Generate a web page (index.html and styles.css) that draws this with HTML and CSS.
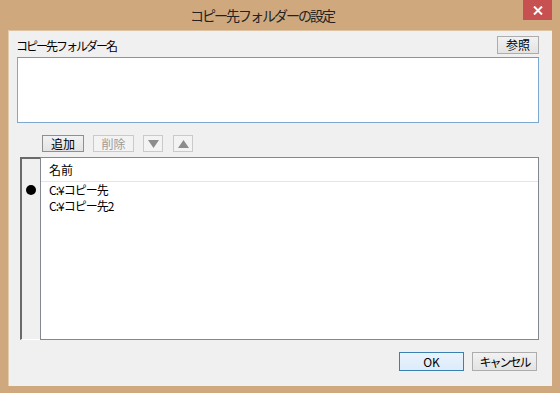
FILE: index.html
```html
<!DOCTYPE html>
<html lang="ja">
<head>
    <meta charset="UTF-8">
    <title>コピー先フォルダーの設定</title>
    <link rel="stylesheet" href="styles.css">
</head>
<body>
    <div class="window">
        <div class="titlebar">
            <span></span>
            <div class="title">コピー先フォルダーの設定</div>
            <button class="close-btn">
                <svg width="10" height="9" viewBox="0 0 10 9"><path d="M1 0.5 L9 8.5 M9 0.5 L1 8.5" stroke="#fff" stroke-width="2"/></svg>
            </button>
        </div>

        <div class="client">
            <div class="top-row">
                <span class="label">コピー先フォルダー名</span>
                <button class="btn browse-btn">参照</button>
            </div>

            <div class="name-box"></div>

            <div class="toolbar">
                <button class="btn add-btn">追加</button>
                <button class="btn del-btn" disabled>削除</button>
                <button class="btn arrow-btn" disabled>
                    <svg width="11" height="8" viewBox="0 0 11 8"><polygon points="0,0 11,0 5.5,8" fill="#8c8c8c"/></svg>
                </button>
                <button class="btn arrow-btn" disabled>
                    <svg width="11" height="8" viewBox="0 0 11 8"><polygon points="0,8 11,8 5.5,0" fill="#8c8c8c"/></svg>
                </button>
            </div>

            <div class="list-area">
                <div class="marker-col">
                    <div class="marker-head"></div>
                    <div class="marker-row"><span class="dot"></span></div>
                    <div class="marker-row"></div>
                </div>
                <div class="list">
                    <div class="list-head">名前</div>
                    <div class="list-row">C:¥コピー先</div>
                    <div class="list-row">C:¥コピー先2</div>
                </div>
            </div>

            <div class="footer">
                <button class="btn ok-btn">OK</button>
                <button class="btn cancel-btn">キャンセル</button>
            </div>
        </div>
    </div>
</body>
</html>
```

FILE: styles.css
```css
* {
    margin: 0;
    padding: 0;
    box-sizing: border-box;
}

body {
    font-family: "Noto Sans CJK JP", "Noto Sans", sans-serif;
    font-size: 12px;
    color: #000;
    background: #cfa97d;
}

.window {
    width: 560px;
    height: 393px;
    background: #cfa97d;
    padding: 0 8px 7px 8px;
    display: flex;
    flex-direction: column;
}

.titlebar {
    height: 30px;
    display: grid;
    grid-template-columns: 1fr auto 1fr;
    align-items: start;
}

.title {
    font-size: 14px;
    letter-spacing: -2px;
    line-height: 31px;
    color: #222;
    margin-right: 36px;
}

.close-btn {
    justify-self: end;
    width: 29px;
    height: 20px;
    border: none;
    background: #c75050;
    display: flex;
    align-items: center;
    justify-content: center;
}

.client {
    flex: 1;
    background: #f0f0f0;
    border-top: 1px solid #dcc3a4;
    border-left: 1px solid #e2cdb2;
    padding: 5px 14px 0 7px;
    display: flex;
    flex-direction: column;
}

.top-row {
    display: flex;
    justify-content: space-between;
    align-items: center;
    height: 18px;
}

.label {
    line-height: 18px;
    padding-top: 2px;
    letter-spacing: -2px;
}

.btn {
    font-family: "Noto Sans CJK JP", "Noto Sans", sans-serif;
    font-size: 12px;
    line-height: 1;
    color: #000;
    border: 1px solid #adadad;
    background: linear-gradient(#f2f2f2, #e3e3e3);
    display: flex;
    align-items: center;
    justify-content: center;
}

.btn:disabled {
    color: #9a9a9a;
    border-color: #cacaca;
    background: #f3f3f3;
}

.browse-btn {
    width: 42px;
    height: 18px;
    margin-right: -1px;
}

.name-box {
    margin-top: 3px;
    margin-left: 1px;
    width: 522px;
    height: 66px;
    background: #fff;
    border: 1px solid #7ea9ce;
    border-top-color: #6b9ac4;
}

.toolbar {
    margin-top: 12px;
    padding-left: 26px;
    display: flex;
    gap: 9px;
    height: 17px;
}

.add-btn {
    width: 42px;
    border-color: #8f8f8f;
}

.del-btn {
    width: 41px;
}

.arrow-btn {
    width: 20px;
}

.arrow-btn + .arrow-btn {
    margin-left: 1px;
}

.list-area {
    margin-top: 5px;
    margin-left: 4px;
    width: 519px;
    height: 183px;
    display: flex;
}

.marker-col {
    width: 20px;
    border-top: 2px solid #6a6a6a;
    border-left: 2px solid #6a6a6a;
    border-bottom: 1px solid #fff;
    background: #f0f0f0;
}

.marker-head {
    height: 23px;
}

.marker-row {
    height: 16px;
    display: flex;
    align-items: center;
    justify-content: center;
}

.dot {
    width: 10px;
    height: 10px;
    border-radius: 50%;
    background: #000;
    margin-left: -1px;
}

.list {
    flex: 1;
    background: #fff;
    border: 1px solid #828790;
}

.list-head {
    height: 24px;
    line-height: 24px;
    padding-left: 8px;
    border-bottom: 1px solid #e5e5e5;
}

.list-row {
    height: 16px;
    line-height: 16px;
    padding-left: 8px;
    letter-spacing: -1px;
}

.footer {
    margin-top: 12px;
    display: flex;
    justify-content: flex-end;
    gap: 8px;
    padding-right: 1px;
}

.ok-btn,
.cancel-btn {
    width: 65px;
    height: 19px;
}

.cancel-btn {
    letter-spacing: -2px;
}

.ok-btn {
    border-color: #3c7fb1;
    background: linear-gradient(#eaf3fb, #dcecfc);
}
```
